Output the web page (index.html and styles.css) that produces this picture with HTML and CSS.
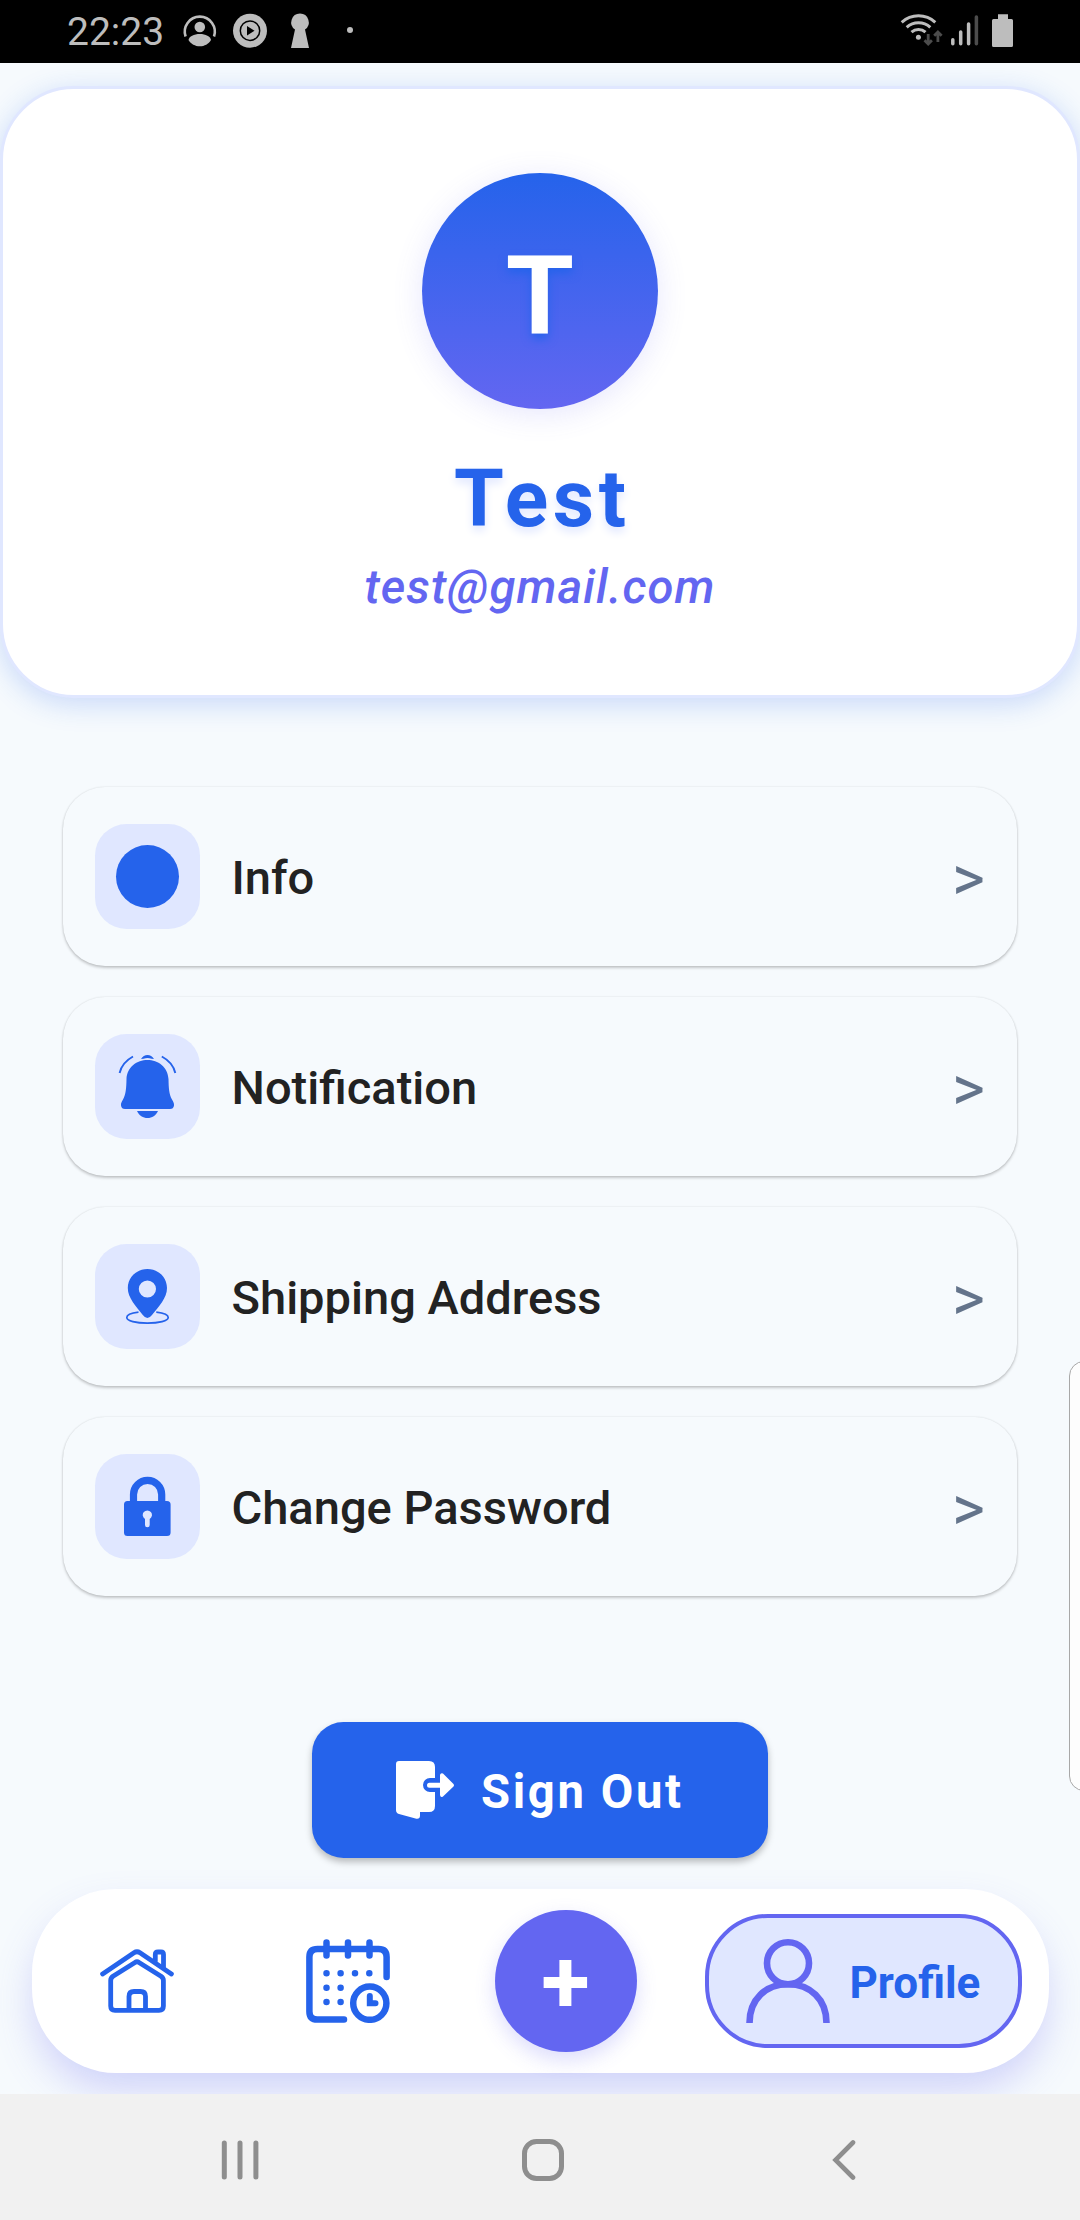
FILE: index.html
```html
<!DOCTYPE html>
<html lang="en">
<head>
<meta charset="utf-8">
<title>Profile</title>
<link rel="stylesheet" href="styles.css">
</head>
<body>
<div class="phone">
  <header class="status-bar">
    <span class="clock">22:23</span>
    <svg class="status-left" width="190" height="63" viewBox="180 0 190 63" fill="#bdbdbd">
      <path d="M185.6 36.5A15 15 0 1 1 214 36.5" fill="none" stroke="#bdbdbd" stroke-width="2.6"/>
      <circle cx="199.800" cy="27" r="5.300"/>
      <path d="M188.500 40C189 36.500 194 34 199.800 34S210.500 36.500 211 40C208.500 44 204.500 46.300 199.800 46.300S191 44 188.500 40Z"/>
      <circle cx="250" cy="30.700" r="17"/>
      <circle cx="250" cy="30.700" r="9.700" fill="none" stroke="#000" stroke-width="1.500"/>
      <path d="M247 26v9.500l7.500-4.700z" fill="#000"/>
      <path d="M300 13.500a8.800 8.800 0 0 1 5 16L309 48h-18l4-18.500a8.800 8.800 0 0 1 5-16z"/>
      <circle cx="350" cy="30" r="3"/>
    </svg>
    <svg class="status-right" width="120" height="63" viewBox="898 0 120 63" fill="#bdbdbd">
      <g fill="none" stroke="#bdbdbd" stroke-width="3">
        <path d="M901.700 22.300a25 25 0 0 1 33.600 0M906.700 27.300a17.500 17.500 0 0 1 23.600 0M911.500 32.200a10.400 10.400 0 0 1 14 0"/>
      </g>
      <circle cx="918.400" cy="37.300" r="2.500"/>
      <path d="M928.200 34v8.500M924.500 40.300l3.700 3.700 3.700-3.700M937.900 42v-8.500M934.200 35.700l3.700-3.700 3.700 3.700" fill="none" stroke="#4c4c4c" stroke-width="2.800"/>
      <path d="M952.800 39.700V43.700M960.700 32V43.700M968.600 24V43.700" stroke="#bdbdbd" stroke-width="3.500" stroke-linecap="round"/>
      <path d="M976.400 17V43.700" stroke="#4c4c4c" stroke-width="3.500" stroke-linecap="round"/>
      <path d="M998 19v-4.700h10V19h3.500a1.500 1.500 0 0 1 1.500 1.500v25a1.500 1.500 0 0 1-1.500 1.500h-18a1.500 1.500 0 0 1-1.500-1.500v-25a1.500 1.500 0 0 1 1.500-1.500z"/>
    </svg>
  </header>

  <main class="screen">
    <section class="profile-card">
      <div class="avatar">T</div>
      <h1 class="name">Test</h1>
      <p class="email">test@gmail.com</p>
    </section>

    <nav class="menu">
      <a class="menu-item">
        <span class="tile"><svg width="105" height="105" viewBox="0 0 105 105"><circle cx="52.500" cy="52.500" r="31.500" fill="#2563eb"/></svg></span>
        <span class="label">Info</span><span class="chevron">&gt;</span>
      </a>
      <a class="menu-item">
        <span class="tile"><svg width="105" height="105" viewBox="0 0 105 105" fill="#2563eb">
          <path d="M52.400 26C63 26 73 33 73.500 45C73.700 54 74 60 77 65.500C78.500 68 79.200 69.500 79 71.500Q78.500 75 75 75H30Q26.500 75 26 71.500C25.800 69.500 26.500 68 28 65.500C31 60 31.300 54 31.500 45C32 33 42 26 52.400 26Z"/>
          <path d="M46 25q2.500-4 6.500-4t6.500 4l-2.500-.2q-4-1.600-8 0z"/>
          <path d="M42 77h21c-2 4.500-6 7-10.500 7S44 81.500 42 77z"/>
          <path d="M24.600 39Q27 28.500 38 22.500M80.300 39Q78 28.500 66.800 22.500" fill="none" stroke="#2563eb" stroke-width="1.900"/>
        </svg></span>
        <span class="label">Notification</span><span class="chevron">&gt;</span>
      </a>
      <a class="menu-item">
        <span class="tile"><svg width="105" height="105" viewBox="0 0 105 105" fill="#2563eb">
          <path fill-rule="evenodd" d="M52.400 25C63.500 25 72 33.500 72 44C72 54 64 62 57 71Q52.400 77 47.800 71C41 62 32.800 54 32.800 44C32.800 33.500 41.500 25 52.400 25ZM52.400 36.400a8.600 8.600 0 1 0 0 17.200a8.600 8.600 0 1 0 0-17.200Z"/>
          <path d="M43.500 68.200C36 69 31.800 71 31.800 73.600C31.800 77 41 79.200 52.400 79.200S73.200 77 73.200 73.600C73.200 71 69 69 61.300 68.200" fill="none" stroke="#2563eb" stroke-width="1.700"/>
        </svg></span>
        <span class="label">Shipping Address</span><span class="chevron">&gt;</span>
      </a>
      <a class="menu-item">
        <span class="tile"><svg width="105" height="105" viewBox="0 0 105 105" fill="#2563eb">
          <path d="M38.500 50V40.500a14 14 0 0 1 28.200 0V50" fill="none" stroke="#2563eb" stroke-width="7.200"/>
          <path fill-rule="evenodd" d="M32.500 47H72Q75.600 47 75.600 50.500V78.500Q75.600 82 72 82H32.500Q29 82 29 78.500V50.500Q29 47 32.500 47ZM50 65V71a2.300 2.300 0 0 0 4.700 0V65a4.600 4.600 0 1 0-4.700 0Z"/>
        </svg></span>
        <span class="label">Change Password</span><span class="chevron">&gt;</span>
      </a>
    </nav>

    <button class="sign-out" type="button">
      <svg width="59" height="59" viewBox="0 0 59 59" fill="#fff">
        <path d="M3 0H33Q39 0 39 6V17H34a7 7 0 0 0 0 14H39V45Q39 51 33 51H24V54.500Q24 58.500 19.500 57.500L3 53Q0 52 0 49V3Q0 0 3 0Z"/>
        <path d="M33.500 21.800H44V14Q44.500 11.500 47 12.500L57.500 23Q58.500 24.300 57.500 25.500L47 35.500Q44.500 37 44 34V26.800H33.500a2.500 2.500 0 0 1 0-5z"/>
      </svg>
      <span>Sign Out</span>
    </button>

    <nav class="tab-bar">
      <a class="tab tab-home"><svg width="74" height="65" viewBox="0 0 74 65" fill="none" stroke="#2563eb" stroke-width="4.800" stroke-linecap="round" stroke-linejoin="round">
        <path d="M2.600 25L34 3.800Q37 1.800 40 3.800L71.400 25"/>
        <path d="M55.300 12V5.500Q55.300 3 58 3H61Q63.500 3 63.500 5.500V18"/>
        <path d="M35 13.500L13 27.300Q10.700 29 10.700 31.500V57Q10.700 61.400 15 61.400H59Q63.400 61.400 63.400 57V31.500Q63.400 29 61 27.300L39 13.500Q37 12 35 13.500Z"/>
        <path d="M29 60V47.500Q29 42.500 34 42.500H40.500Q45.500 42.500 45.500 47.500V60"/>
      </svg></a>
      <a class="tab tab-calendar"><svg width="84" height="84" viewBox="0 0 84 84" fill="none" stroke="#2563eb" stroke-width="6.500" stroke-linecap="round">
        <path d="M80.600 38V18Q80.600 10 72.500 10H11.500Q3.400 10 3.400 18V72.500Q3.400 80.600 11.500 80.600H38"/>
        <path d="M20.500 3.400V16.500M42 3.400V16.500M63.500 3.400V16.500"/>
        <circle cx="63.800" cy="64.200" r="16.600"/>
        <path d="M63.800 57V64.300H69.500" stroke-width="6"/>
        <path d="M20.500 34.300h.01M34.600 34.300h.01M49 34.300h.01M63.300 34.300h.01M20.500 48.700h.01M34.600 48.700h.01M20.500 63h.01M34.600 63h.01"/>
      </svg></a>
      <a class="tab-add">+</a>
      <a class="tab-profile">
        <svg width="84" height="84" viewBox="0 0 84 84" fill="none" stroke="#6366f1" stroke-width="6.600">
          <circle cx="42" cy="24.300" r="21"/>
          <path d="M3.500 84C3.500 60 20 45.300 42 45.300S80.500 60 80.500 84"/>
        </svg>
        <span>Profile</span>
      </a>
    </nav>
    <div class="edge-handle"></div>
  </main>

  <footer class="system-bar">
    <svg width="40" height="42" viewBox="0 0 40 42"><path d="M4.300 4V38M20 4V38M35.900 4V38" stroke="#8e8e8e" stroke-width="5" stroke-linecap="round"/></svg>
    <svg class="system-home" width="42" height="42" viewBox="0 0 42 42"><rect x="2.500" y="2.500" width="37" height="37" rx="12" fill="none" stroke="#8e8e8e" stroke-width="5"/></svg>
    <svg width="24" height="42" viewBox="0 0 24 42"><path d="M21 3.500L3.500 21L21 38.500" fill="none" stroke="#8e8e8e" stroke-width="4.600" stroke-linecap="round"/></svg>
  </footer>
</div>
</body>
</html>
```
FILE: styles.css
```css
* {
  box-sizing: border-box;
}

body {
  margin: 0;
  font-family: Roboto, "Liberation Sans", sans-serif;
}

svg {
  display: block;
  flex: none;
}

.phone {
  width: 1080px;
  height: 2220px;
  display: flex;
  flex-direction: column;
  overflow: hidden;
}

.status-bar {
  height: 63px;
  flex: none;
  padding: 0 62px 0 67px;
  display: flex;
  align-items: center;
  background: #000;
}

.clock {
  width: 113px;
  font-size: 39px;
  line-height: 63px;
  padding-top: 1px;
  color: #bdbdbd;
}

.status-right {
  margin-left: auto;
}

.screen {
  position: relative;
  flex: 1;
  min-height: 0;
  padding-top: 23px;
  display: flex;
  flex-direction: column;
  align-items: center;
  background: #f6fafd;
  overflow: hidden;
}

.profile-card {
  width: 1080px;
  height: 612px;
  flex: none;
  padding-top: 84px;
  display: flex;
  flex-direction: column;
  align-items: center;
  background: #fff;
  border: 3px solid #e0e7ff;
  border-radius: 74px;
  box-shadow: 0 6px 28px rgba(37, 99, 235, 0.22);
}

.avatar {
  width: 236px;
  height: 236px;
  border-radius: 50%;
  background: linear-gradient(#2563eb, #6366f1);
  box-shadow: 0 5px 30px rgba(99, 102, 241, 0.16);
  color: #fff;
  font-size: 110.25px;
  font-weight: 700;
  line-height: 246px;
  text-align: center;
  text-shadow: 0 5px 10px #2563eb;
}

.name {
  margin: 44px 0 0;
  padding-left: 4.6px;
  font-size: 80.5px;
  font-weight: 700;
  line-height: 92px;
  letter-spacing: 4.6px;
  color: #2563eb;
  text-shadow: 0 5px 10px #e0e7ff;
}

.email {
  margin: 14px 0 0;
  font-size: 47.25px;
  font-weight: 500;
  font-style: italic;
  line-height: 56px;
  letter-spacing: 1.05px;
  color: #6366f1;
}

.menu {
  width: 954px;
  margin-top: 89px;
  display: flex;
  flex-direction: column;
  gap: 31.5px;
}

.menu-item {
  height: 178.5px;
  padding: 0 32px;
  display: flex;
  align-items: center;
  border-radius: 42px;
  background: #f6fafd;
  box-shadow: 0 2px 3px rgba(0, 0, 0, 0.2), 0 0 2px rgba(0, 0, 0, 0.12);
}

.tile {
  width: 105px;
  height: 105px;
  border-radius: 31.5px;
  background: #e0e7ff;
}

.label {
  margin-left: 31.5px;
  padding-top: 3px;
  font-size: 47.05px;
  font-weight: 500;
  color: #222;
}

.chevron {
  margin-left: auto;
  padding-top: 5px;
  font-size: 63px;
  font-weight: 400;
  color: #64748b;
}

.sign-out {
  width: 456px;
  height: 136px;
  margin: 126.5px 0 0;
  padding: 0 0 0 84px;
  flex: none;
  display: flex;
  align-items: center;
  gap: 26px;
  border: 0;
  border-radius: 31.5px;
  background: #2563eb;
  box-shadow: 0 4px 7px rgba(0, 0, 0, 0.26);
  font: 700 47.25px Roboto, "Liberation Sans", sans-serif;
  letter-spacing: 2.6px;
  color: #fff;
}

.sign-out span {
  padding-top: 3px;
}

.tab-bar {
  width: 1017px;
  height: 184px;
  margin-top: 31px;
  padding: 0 27px 0 68px;
  flex: none;
  display: flex;
  align-items: center;
  border-radius: 84px;
  background: #fff;
  box-shadow: 0 20px 40px -4px rgba(99, 102, 241, 0.28);
}

.tab-calendar {
  margin-left: 132px;
}

.tab-add {
  width: 142px;
  height: 142px;
  margin-left: 105px;
  border-radius: 50%;
  background: #6366f1;
  box-shadow: 0 8px 20px rgba(99, 102, 241, 0.22);
  color: #fff;
  font-size: 89px;
  font-weight: 700;
  line-height: 144px;
  text-align: center;
}

.tab-profile {
  width: 317px;
  height: 134px;
  margin-left: auto;
  padding-left: 37px;
  display: flex;
  align-items: center;
  gap: 20px;
  border: 4px solid #6366f1;
  border-radius: 63px;
  background: #e0e7ff;
  font-size: 44px;
  font-weight: 700;
  color: #2563eb;
}

.tab-profile span {
  padding-top: 3px;
}

/* Side panel handle peeking in over the right edge of the screen */
.edge-handle {
  position: absolute;
  top: 1298px;
  right: -20px;
  width: 31px;
  height: 430px;
  border: 1.5px solid #a8a8a8;
  border-radius: 15px;
  background: #fdfdfd;
}

.system-bar {
  height: 126px;
  flex: none;
  padding: 6px 224px 0 220px;
  display: flex;
  align-items: center;
  justify-content: space-between;
  background: #f1f1f1;
}

.system-home {
  margin-right: 7px;
}
```
